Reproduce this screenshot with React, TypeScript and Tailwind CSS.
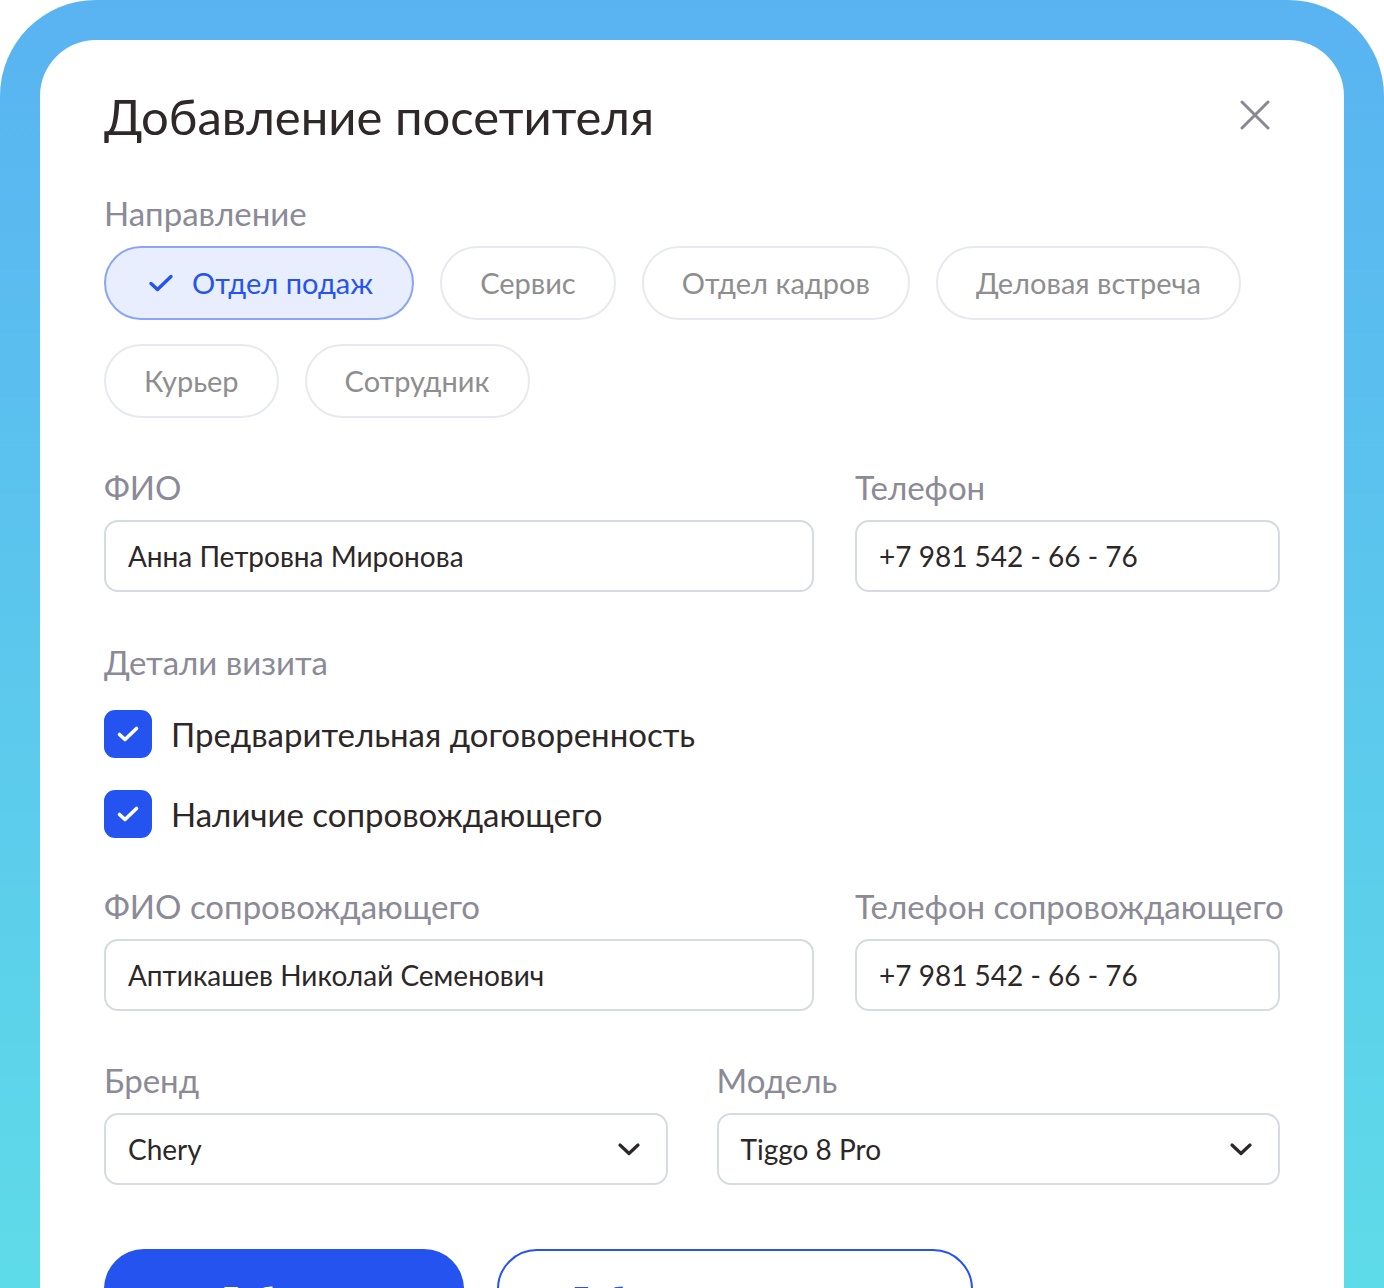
import { useState } from "react";

const directions = [
  "Отдел подаж",
  "Сервис",
  "Отдел кадров",
  "Деловая встреча",
  "Курьер",
  "Сотрудник",
];

function Label({ children }: { children: React.ReactNode }) {
  return (
    <div className="mb-[13px] whitespace-nowrap text-[33px] leading-[40px] text-[#8b8a96]">
      {children}
    </div>
  );
}

function TextField({ value }: { value: string }) {
  return (
    <div className="flex h-[72px] items-center rounded-[14px] border-2 border-[#d6dbe2] px-[22px] text-[28px] text-[#2d2727]">
      {value}
    </div>
  );
}

function SelectField({ value }: { value: string }) {
  return (
    <div className="flex h-[72px] items-center justify-between rounded-[14px] border-2 border-[#d6dbe2] pl-[22px] pr-[25px] text-[28px] text-[#2d2727]">
      <span>{value}</span>
      <svg width="24" height="24" viewBox="0 0 24 24" fill="none">
        <path
          d="M3 8l9 8.5L21 8"
          stroke="#2d2727"
          strokeWidth="3.2"
          strokeLinecap="round"
          strokeLinejoin="round"
        />
      </svg>
    </div>
  );
}

function Checkbox({ label }: { label: string }) {
  return (
    <div className="flex h-[48px] items-center gap-[19px]">
      <div className="flex h-[48px] w-[48px] items-center justify-center rounded-[11px] bg-[#2553f0]">
        <svg width="26" height="26" viewBox="0 0 26 26" fill="none">
          <path
            d="M4.5 13.5l5.5 5L21.5 7.5"
            stroke="white"
            strokeWidth="3.6"
            strokeLinecap="round"
            strokeLinejoin="round"
          />
        </svg>
      </div>
      <span className="text-[33px] leading-[48px] text-[#2d2727]">{label}</span>
    </div>
  );
}

export default function App() {
  const [selected, setSelected] = useState("Отдел подаж");

  return (
    <div
      className="h-[1288px] overflow-hidden bg-white"
      style={{ fontFamily: "Lato, 'Noto Sans', sans-serif" }}
    >
      <div className="h-full rounded-t-[96px] bg-gradient-to-b from-[#59b3f1] to-[#5edbe8] px-[40px] pt-[40px]">
        <div className="h-[1400px] rounded-t-[56px] bg-white px-[64px] pt-[46px]">
          {/* Header */}
          <div className="flex items-center justify-between">
            <h1 className="text-[49px] leading-[60px] text-[#2f2828]">
              Добавление посетителя
            </h1>
            <svg
              className="mr-[10px] mt-[-2px]"
              width="30"
              height="30"
              viewBox="0 0 30 30"
              fill="none"
            >
              <path
                d="M2 2l26 26M28 2L2 28"
                stroke="#8a8795"
                strokeWidth="3"
                strokeLinecap="round"
              />
            </svg>
          </div>

          {/* Direction */}
          <div className="mt-[47px]">
            <Label>Направление</Label>
            <div className="flex flex-wrap gap-x-[26px] gap-y-[24px]">
              {directions.map((d) => {
                const active = d === selected;
                return (
                  <button
                    key={d}
                    onClick={() => setSelected(d)}
                    className={
                      active
                        ? "flex h-[74px] items-center gap-[18px] rounded-full border-2 border-[#8aa5f6] bg-[#e8eefd] pl-[42px] pr-[39px] text-[29px] text-[#2553f0]"
                        : "flex h-[74px] items-center rounded-full border-2 border-[#e6eaf0] bg-white px-[38px] text-[29px] text-[#8e8e8e]"
                    }
                  >
                    {active && (
                      <svg width="26" height="26" viewBox="0 0 26 26" fill="none">
                        <path
                          d="M3 13.5l6.5 6L23 6.5"
                          stroke="#2553f0"
                          strokeWidth="3.4"
                          strokeLinecap="round"
                          strokeLinejoin="round"
                        />
                      </svg>
                    )}
                    {d}
                  </button>
                );
              })}
            </div>
          </div>

          {/* Visitor */}
          <div className="mt-[49px] grid grid-cols-[1fr_425px] gap-x-[41px]">
            <div>
              <Label>ФИО</Label>
              <TextField value="Анна Петровна Миронова" />
            </div>
            <div>
              <Label>Телефон</Label>
              <TextField value="+7 981 542 - 66 - 76" />
            </div>
          </div>

          {/* Details */}
          <div className="mt-[50px]">
            <div className="text-[33px] leading-[40px] text-[#8b8a96]">
              Детали визита
            </div>
            <div className="mt-[28px] flex flex-col gap-[32px]">
              <Checkbox label="Предварительная договоренность" />
              <Checkbox label="Наличие сопровождающего" />
            </div>
          </div>

          {/* Escort */}
          <div className="mt-[48px] grid grid-cols-[1fr_425px] gap-x-[41px]">
            <div>
              <Label>ФИО сопровождающего</Label>
              <TextField value="Аптикашев Николай Семенович" />
            </div>
            <div>
              <Label>Телефон сопровождающего</Label>
              <TextField value="+7 981 542 - 66 - 76" />
            </div>
          </div>

          {/* Car */}
          <div className="mt-[49px] grid grid-cols-2 gap-x-[49px]">
            <div>
              <Label>Бренд</Label>
              <SelectField value="Chery" />
            </div>
            <div>
              <Label>Модель</Label>
              <SelectField value="Tiggo 8 Pro" />
            </div>
          </div>

          {/* Actions */}
          <div className="mt-[64px] flex gap-[33px]">
            <button className="h-[96px] w-[360px] rounded-[40px] bg-[#2553f0] text-[29px] font-bold text-white">
              Добавить
            </button>
            <button className="h-[96px] w-[476px] rounded-[40px] border-2 border-[#2553f0] text-[29px] font-bold text-[#2553f0]">
              Добавить и продолжить
            </button>
          </div>
        </div>
      </div>
    </div>
  );
}
